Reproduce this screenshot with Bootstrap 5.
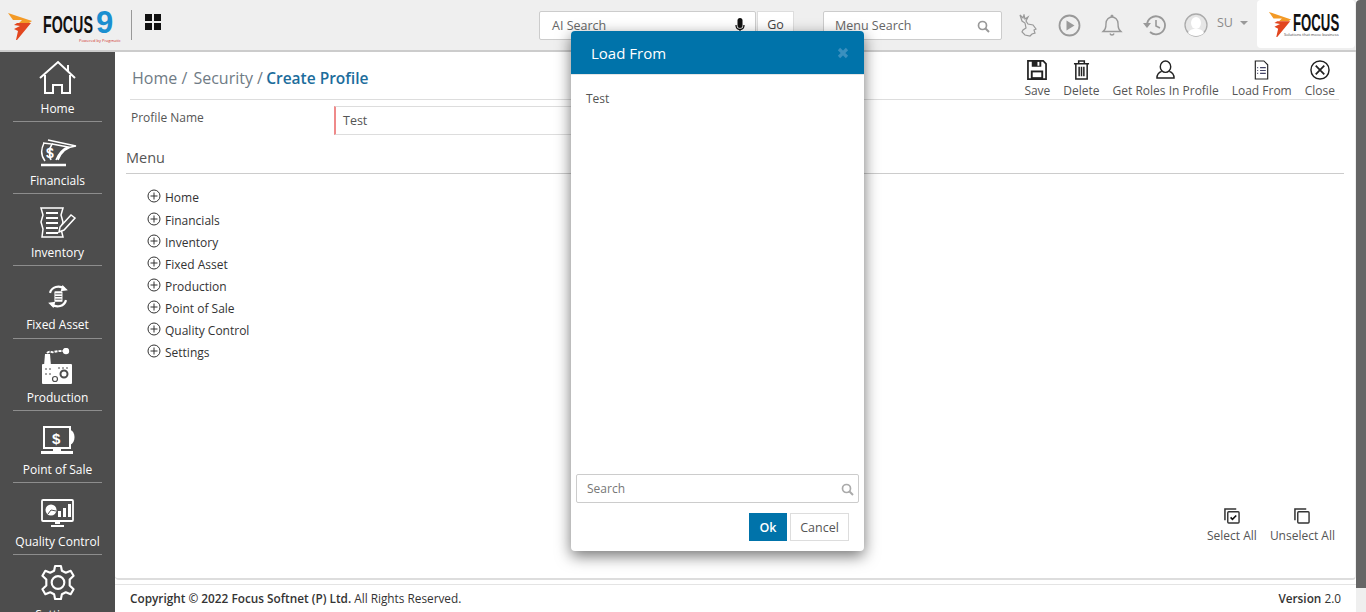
<!DOCTYPE html>
<html lang="en">
<head>
<meta charset="UTF-8">
<title>Create Profile</title>
<link href="https://cdn.jsdelivr.net/npm/bootstrap@5.3.0/dist/css/bootstrap.min.css" rel="stylesheet">
<style>
html, body { height: 612px; overflow: hidden; }
body { font-family: "Open Sans", "Liberation Sans", sans-serif; font-size: 12px; color: #444; background: #fff; position: relative; }
.app-left { width: 1356px; flex-shrink: 0; }
.top-bar { height: 52px; background: #efefef; border-bottom: 2px solid #ccc; padding-left: 8px; }
.brand-flame { margin-top: 3px; margin-right: 11px; }
.brand-block { width: 88px; height: 40px; position: relative; }
.brand-word { display: block; font-family: "Liberation Sans", sans-serif; font-weight: 700; color: #111; transform: scaleX(.62); transform-origin: left center; font-size: 23px; line-height: 1; width: 50px; white-space: nowrap; margin-top: 9px; }
.brand-nine { position: absolute; left: 53px; top: 2px; font-family: "Liberation Sans", sans-serif; font-weight: 700; font-size: 31px; color: #1b8fd0; line-height: 1; }
.brand-tag { position: absolute; left: 36px; top: 33px; font-size: 4px; line-height: 5px; color: #d0342c; white-space: nowrap; }
.brand-rule { width: 1px; height: 30px; background: #999; margin-right: 13px; }
.top-input { height: 29px; background: #fff; border: 1px solid #ccc; border-radius: 2px; color: #666; font-size: 12.5px; padding: 2px 11px 0; }
.top-ai { width: 217px; margin-left: 378px; padding-left: 12px; }
.top-go { width: 37px; height: 28px; margin-left: 1px; background: #fff; border: 1px solid #ddd; font-size: 12.5px; color: #444; text-align: center; line-height: 26px; }
.top-menu { width: 179px; margin-left: 29px; }
.top-icons { margin-left: 14px; width: 241px; }
.user-tag { color: #8a8a8a; font-size: 12.5px; }
.logo-box { width: 98px; height: 48px; background: #fff; border-radius: 4px; padding: 0 0 0 11px; margin-bottom: 2px; }
.logo-word { display: block; font-family: "Liberation Sans", sans-serif; font-weight: 700; color: #111; font-size: 24px; line-height: 18px; transform: scaleX(.55); transform-origin: left center; white-space: nowrap; width: 46px; }
.logo-sub { font-size: 4px; color: #444; line-height: 4px; white-space: nowrap; margin-left: -9px; margin-top: 1px; }
.page-body { height: 560px; }
.side-nav { width: 115px; background: #4d4d4d; overflow: hidden; flex-shrink: 0; color: #fff; }
.side-item { height: 72.2px; margin: 0 13px; border-bottom: 1px solid #8d8d8d; display: flex; flex-direction: column; align-items: center; justify-content: flex-end; padding-bottom: 4px; font-size: 12px; white-space: nowrap; line-height: 17px; }
.side-item svg { margin-bottom: 5px; }
.side-item:first-child { height: 70px; }
.side-raise { padding-bottom: 5px; }
.side-raise svg { margin-bottom: 7px; }
.side-last { border-bottom: 0; height: 72px; justify-content: flex-start; padding-top: 9px; }
.main-area { width: 1241px; }
.scroll-strip { width: 10px; height: 612px; background: #666; position: relative; flex-shrink: 0; border-radius: 4px 0 0 0; }
.scroll-end { position: absolute; left: 0; right: 0; bottom: 0; height: 24px; background: #efefef; }
.work-pane { height: 528px; padding: 0 11px 0 11px; position: relative; border-bottom: 2px solid #ddd; border-right: 1px solid #eee; border-radius: 0 0 4px 4px; }
.title-row { height: 48px; margin-left: 4px; margin-right: 5px; border-bottom: 1px solid #ddd; }
.crumbs { font-size: 16px; color: #6f7b85; padding-left: 2px; padding-bottom: 9px; line-height: 24px; }
.crumbs b { color: #1c6d9c; font-weight: 600; font-size: 15.5px; margin-left: -3px; }
.crumbs span { margin-right: 2px; }
.tool-group { margin-right: 4px; }
.tool-btn { display: flex; flex-direction: column; align-items: center; line-height: 16px; font-size: 12px; color: #555; margin-left: 13px; white-space: nowrap; }
.tool-btn svg { height: 20px; margin-bottom: 3px; }
.form-line { height: 35px; margin-left: 5px; }
.form-label-text { width: 203px; padding-top: 9px; color: #555; font-size: 12px; }
.name-input { width: 300px; height: 29px; margin-top: 6px; border: 1px solid #ddd; border-left: 2px solid #ef8a8a; padding: 0 7px; line-height: 28px; color: #555; font-size: 12.5px; }
.menu-title { font-size: 14.5px; color: #555; line-height: 20px; padding-top: 13px; border-bottom: 1px solid #ccc; box-sizing: content-box; height: 25px; }
.tree-list { padding: 13px 0 0 21px; margin: 0; list-style: none; }
.tree-list li { height: 22px; display: flex; align-items: center; gap: 4px; color: #333; font-size: 12px; }
.tree-list li:first-child { height: 23px; padding-bottom: 1px; }
.tree-list svg { margin-bottom: 4px; }
.pick-row { position: absolute; right: 20px; bottom: 34px; gap: 13px; }
.pick-btn { display: flex; flex-direction: column; align-items: center; color: #555; font-size: 12px; line-height: 16px; gap: 4px; }
.foot-bar { height: 28px; margin-top: 4px; border-top: 1px solid #e4e4e4; padding: 0 15px 0 15px; font-size: 11.800px; color: #333; }
.foot-bar b { font-weight: 600; }
.load-dialog { position: absolute; left: 571px; top: 31px; width: 293px; height: 520px; background: #fff; border-radius: 4px; box-shadow: 0 5px 15px rgba(0,0,0,.55); border: 0; overflow: hidden; z-index: 5; }
.load-head { background: #0073aa; color: #fff; font-size: 15px; padding: 1px 15px 0 20px; border-radius: 0; border-bottom: 1px solid #e5e5e5; height: 44px; flex-shrink: 0; }
.load-main { padding: 15px 15px; color: #555; font-size: 12px; line-height: 17px; }
.load-search { height: 29px; margin: 0 5px; border: 1px solid #ccc; border-radius: 2px; padding: 1px 4px 0 10px; color: #777; font-size: 12px; flex-shrink: 0; }
.load-foot { height: 48px; padding: 10px 15px 0 0; gap: 3px; flex-shrink: 0; }
.act-ok { width: 38px; height: 28px; background: #0073aa; color: #fff; font-size: 12.5px; font-weight: 600; border: 0; border-radius: 0; padding: 2px 0 0; margin: 0; }
.act-cancel { width: 59px; height: 28px; background: #fff; color: #555; font-size: 12.5px; border: 1px solid #ddd; border-radius: 0; padding: 2px 0 0; margin: 0; }
</style>
</head>
<body>
<div class="d-flex">
<div class="app-left">
<header class="top-bar d-flex align-items-center">
  <svg width="24" height="27" viewBox="0 0 24 27" class="brand-flame flex-shrink-0"><polygon points="0,0 24,8 21,10 11,10 14,7 5,7" fill="#f39a26"/><polygon points="9,10 23,10 9,27 8,27 10,18 6,16 12,13 6,12" fill="#e2461f"/></svg>
  <div class="brand-block flex-shrink-0">
    <span class="brand-word">FOCUS</span>
    <span class="brand-nine">9</span>
    <span class="brand-tag">Powered by Pragmatic</span>
  </div>
  <div class="brand-rule"></div>
  <svg width="16" height="16" viewBox="0 0 16 16" class="flex-shrink-0" style="margin-bottom:6px"><path d="M0 0h7v7H0zM9 0h7v7H9zM0 9h7v7H0zM9 9h7v7H9z" fill="#111"/></svg>
  <div class="top-input top-ai d-flex align-items-center justify-content-between flex-shrink-0">
    <span>AI Search</span>
    <svg width="10" height="17" viewBox="0 0 10 17" style="margin-right:-1px"><rect x="2.500" y="0" width="5" height="10" rx="2.500" fill="#111"/><path d="M1 7c0 6 8 6 8 0M5 12v3M2 16h6" stroke="#111" stroke-width="1.300" fill="none"/></svg>
  </div>
  <div class="top-go flex-shrink-0">Go</div>
  <div class="top-input top-menu d-flex align-items-center justify-content-between flex-shrink-0">
    <span>Menu Search</span>
    <svg width="13" height="13" viewBox="0 0 13 13"><circle cx="5.500" cy="5.500" r="4" stroke="#999" stroke-width="1.700" fill="none"/><path d="M8.500 8.500l3.500 3.500" stroke="#999" stroke-width="2"/></svg>
  </div>
  <div class="top-icons d-flex align-items-center flex-shrink-0">
    <svg width="18" height="23" viewBox="0 0 18 23" style="margin-left:3px" fill="none" stroke="#999" stroke-width="1.200"><path d="M1 1l3 3 1-3 1 4 3-2-2 4 2 3 5 1 3 4-2 1 1 3-3 1-2 2-5-1-3-3 1-2 3-2-1-5-3-2z"/></svg>
    <svg width="23" height="23" viewBox="0 0 23 23" style="margin-left:21px"><circle cx="11.500" cy="11.500" r="10" fill="none" stroke="#999" stroke-width="1.800"/><polygon points="8.500,6.500 16.500,11.500 8.500,16.500" fill="#999"/></svg>
    <svg width="22" height="24" viewBox="0 0 22 24" style="margin-left:20px"><path d="M2 18.500c2-2 3-3 3-8 0-4 3-6.500 6-6.500s6 2.500 6 6.500c0 5 1 6 3 8zM9 20.500c.5 2 3.500 2 4 0M10 4c0-2.500 2-2.500 2 0" fill="none" stroke="#999" stroke-width="1.400"/></svg>
    <svg width="23" height="22" viewBox="0 0 23 22" style="margin-left:20px"><path d="M4 11a9 9 0 1 1 3 7" fill="none" stroke="#999" stroke-width="1.800"/><polygon points="0,9 8,9 4,14" fill="#999"/><path d="M13 6v6l4 2" fill="none" stroke="#999" stroke-width="1.600"/></svg>
    <svg width="24" height="24" viewBox="0 0 24 24" style="margin-left:18px"><circle cx="12" cy="12" r="11" fill="#e6e6e6" stroke="#aaa" stroke-width="1.300"/><ellipse cx="12" cy="10" rx="5" ry="6" fill="#fff"/><path d="M4 20c2-4 5-4 8-4s6 0 8 4c-4 4-12 4-16 0z" fill="#fff"/></svg>
    <span class="user-tag" style="margin-left:9px;margin-bottom:4px">SU</span>
    <svg width="8" height="4" viewBox="0 0 8 4" style="margin-left:7px;margin-bottom:4px"><polygon points="0,0 8,0 4,4" fill="#999"/></svg>
  </div>
  <div class="logo-box d-flex align-items-center flex-shrink-0">
    <svg width="24" height="25" viewBox="0 0 24 27" class="flex-shrink-0"><polygon points="0,0 24,8 21,10 11,10 14,7 5,7" fill="#f39a26"/><polygon points="9,10 23,10 9,27 8,27 10,18 6,16 12,13 6,12" fill="#e2461f"/></svg>
    <div style="margin-left:1px;margin-top:3px">
      <span class="logo-word">FOCUS</span>
      <div class="logo-sub">Solutions that move business</div>
    </div>
  </div>
</header>
<div class="page-body d-flex">
  <nav class="side-nav">
    <div class="side-item">
      <svg width="38" height="35" viewBox="0 0 38 35" fill="none" stroke="#fff" stroke-width="2"><path d="M1 18L19 2l17 16M6 15v18h8v-8h9v8h8V15M29 5v6"/></svg>Home
    </div>
    <div class="side-item">
      <svg width="38" height="28" viewBox="0 0 38 28" fill="none" stroke="#fff" stroke-width="1.500"><path d="M9 1l28 6C27 8 22 13 19 21M5 4C2 10 2 17 6 22M13 5l16 3c-6 2-9 6-12 13M25 10c-3 2-5 6-6 11"/><path d="M4 4l9 1c-3 5-3 11-1 16"/><path d="M2 26h25" stroke-width="2.500"/><text x="7" y="19" font-size="14" font-weight="700" fill="#fff" stroke="none" font-family="Liberation Sans, sans-serif">$</text></svg>Financials
    </div>
    <div class="side-item">
      <svg width="38" height="32" viewBox="0 0 38 32" fill="none" stroke="#fff" stroke-width="1.500"><path d="M2 1h22l-2 7 2 7-2 7 2 8H3l1-8-2-7 2-7z"/><path d="M7 6h12M7 11h12M7 16h12M7 21h12M7 26h12" stroke-width="2"/><path d="M21 20l11-12 4 3-11 12-5 2z" fill="#4d4d4d"/></svg>Inventory
    </div>
    <div class="side-item side-raise">
      <svg width="22" height="25" viewBox="0 0 24 28" fill="none" stroke="#fff" stroke-width="2.500"><path d="M3 10C5 3 13 1 19 5M21 18c-2 7-10 9-16 5"/><polygon points="17,1 23,7 15,8" fill="#fff" stroke="none"/><polygon points="7,27 1,21 9,20" fill="#fff" stroke="none"/><rect x="8" y="8" width="9" height="12" rx="1" fill="#fff" stroke="none"/><path d="M9 11h7M9 14h7M9 17h7" stroke="#4d4d4d" stroke-width="1"/></svg>Fixed Asset
    </div>
    <div class="side-item">
      <svg width="31" height="36" viewBox="0 0 31 36"><polygon points="2,18 3,6 8,6 9,18" fill="#fff"/><path d="M5 5C8 2 9 5 12 4s6-1 9-1" fill="none" stroke="#fff" stroke-width="2" stroke-dasharray="3 1"/><circle cx="24" cy="3" r="3.200" fill="#fff"/><rect x="0" y="16" width="30" height="20" rx="1" fill="#fff"/><circle cx="22" cy="26" r="3.500" fill="none" stroke="#4d4d4d" stroke-width="2"/><circle cx="13" cy="31" r="2.500" fill="none" stroke="#4d4d4d" stroke-width="1.200"/><path d="M3 21h8M16 20h10M3 26h6" stroke="#4d4d4d" stroke-width="1" stroke-dasharray="2 2"/></svg>Production
    </div>
    <div class="side-item">
      <svg width="36" height="30" viewBox="0 0 36 30"><rect x="4" y="1" width="26" height="21" fill="none" stroke="#fff" stroke-width="2"/><path d="M30 4c6 1 6 13 0 15z" fill="#fff"/><rect x="1" y="25" width="32" height="3" fill="#fff"/><rect x="13" y="22" width="8" height="3" fill="#fff"/><text x="12" y="18" font-size="15" font-weight="700" fill="#fff" font-family="Liberation Sans, sans-serif">$</text></svg>Point of Sale
    </div>
    <div class="side-item">
      <svg width="33" height="29" viewBox="0 0 33 29"><rect x="1" y="1" width="31" height="21" rx="1" fill="none" stroke="#fff" stroke-width="1.800"/><circle cx="10" cy="11" r="5.500" fill="#fff"/><path d="M10 11l5 1M10 11l-3 4" stroke="#4d4d4d"/><rect x="17" y="12" width="3" height="6" fill="#fff"/><rect x="22" y="9" width="3" height="9" fill="#fff"/><rect x="27" y="5" width="3" height="13" fill="#fff"/><path d="M14 22h5v3h-5zM10 26h13v2H10z" fill="#fff"/></svg>Quality Control
    </div>
    <div class="side-item side-last">
      <svg width="38" height="38" viewBox="0 0 38 38" fill="none" stroke="#fff" stroke-width="2.200"><circle cx="19" cy="19" r="6.500"/><path d="M16 2h6l1 5 4 2 5-2 3 5-4 4v6l4 4-3 5-5-2-4 2-1 5h-6l-1-5-4-2-5 2-3-5 4-4v-6l-4-4 3-5 5 2 4-2z" stroke-linejoin="round"/></svg>Settings
    </div>
  </nav>
  <div class="main-area d-flex flex-column">
    <section class="work-pane">
      <div class="title-row d-flex justify-content-between align-items-end">
        <div class="crumbs"><span>Home /</span> <span>Security /</span> <b>Create Profile</b></div>
        <div class="d-flex tool-group">
          <div class="tool-btn"><svg width="20" height="20" viewBox="0 0 21 21"><path d="M1 1h16l3 3v16H1z" fill="none" stroke="#222" stroke-width="1.800"/><path d="M5 1h10v6H5zM4 11h13v9H4z" fill="#222"/><rect x="11" y="2" width="2" height="4" fill="#fff"/><rect x="6" y="13" width="9" height="5" fill="#fff"/></svg>Save</div>
          <div class="tool-btn"><svg width="17" height="20" viewBox="0 0 18 21" fill="none" stroke="#222" stroke-width="1.600"><path d="M1 4h16M6 4V1h6v3M3 4v16h12V4"/><path d="M6.500 7v10M9 7v10M11.500 7v10"/></svg>Delete</div>
          <div class="tool-btn"><svg width="19" height="20" viewBox="0 0 20 21" fill="none" stroke="#222" stroke-width="1.500"><ellipse cx="10" cy="7" rx="5.500" ry="6"/><path d="M6 12c-3 1-5 3-5 7h18c0-4-2-6-5-7"/></svg>Get Roles In Profile</div>
          <div class="tool-btn"><svg width="15" height="20" viewBox="0 0 15 21" fill="none" stroke="#222" stroke-width="1.200"><path d="M1 1h9l4 4v15H1z"/><path d="M3 8h1M6 8h6M3 11h1M6 11h6M3 14h1M6 14h6" stroke="#446"/></svg>Load From</div>
          <div class="tool-btn"><svg width="20" height="20" viewBox="0 0 21 21" fill="none" stroke="#222" stroke-width="1.500"><circle cx="10.500" cy="10.500" r="9.500"/><path d="M6 6l9 9M15 6l-9 9" stroke-width="1.800"/></svg>Close</div>
        </div>
      </div>
      <div class="form-line d-flex">
        <div class="form-label-text">Profile Name</div>
        <div class="name-input">Test</div>
      </div>
      <div class="menu-title">Menu</div>
      <ul class="tree-list">
        <li><svg width="14" height="14" viewBox="0 0 14 14" fill="none" stroke="#333"><circle cx="7" cy="7" r="6"/><path d="M7 3.500v7M3.500 7h7"/></svg>Home</li>
        <li><svg width="14" height="14" viewBox="0 0 14 14" fill="none" stroke="#333"><circle cx="7" cy="7" r="6"/><path d="M7 3.500v7M3.500 7h7"/></svg>Financials</li>
        <li><svg width="14" height="14" viewBox="0 0 14 14" fill="none" stroke="#333"><circle cx="7" cy="7" r="6"/><path d="M7 3.500v7M3.500 7h7"/></svg>Inventory</li>
        <li><svg width="14" height="14" viewBox="0 0 14 14" fill="none" stroke="#333"><circle cx="7" cy="7" r="6"/><path d="M7 3.500v7M3.500 7h7"/></svg>Fixed Asset</li>
        <li><svg width="14" height="14" viewBox="0 0 14 14" fill="none" stroke="#333"><circle cx="7" cy="7" r="6"/><path d="M7 3.500v7M3.500 7h7"/></svg>Production</li>
        <li><svg width="14" height="14" viewBox="0 0 14 14" fill="none" stroke="#333"><circle cx="7" cy="7" r="6"/><path d="M7 3.500v7M3.500 7h7"/></svg>Point of Sale</li>
        <li><svg width="14" height="14" viewBox="0 0 14 14" fill="none" stroke="#333"><circle cx="7" cy="7" r="6"/><path d="M7 3.500v7M3.500 7h7"/></svg>Quality Control</li>
        <li><svg width="14" height="14" viewBox="0 0 14 14" fill="none" stroke="#333"><circle cx="7" cy="7" r="6"/><path d="M7 3.500v7M3.500 7h7"/></svg>Settings</li>
      </ul>
      <div class="pick-row d-flex">
        <div class="pick-btn"><svg width="16" height="16" viewBox="0 0 17 17" fill="none"><path d="M1 13V1h12" stroke="#333" stroke-width="1.600"/><rect x="4" y="4" width="12" height="12" rx="1" stroke="#333" stroke-width="1.500" fill="#fff"/><path d="M7 10l2 2 4-4" stroke="#111" stroke-width="1.700"/></svg>Select All</div>
        <div class="pick-btn"><svg width="16" height="16" viewBox="0 0 17 17" fill="none"><path d="M1 13V1h12" stroke="#333" stroke-width="1.600"/><rect x="4" y="4" width="12" height="12" rx="1" stroke="#333" stroke-width="1.500" fill="#fff"/></svg>Unselect All</div>
      </div>
    </section>
    <footer class="foot-bar d-flex justify-content-between align-items-center">
      <div><b>Copyright © 2022 Focus Softnet (P) Ltd.</b> All Rights Reserved.</div>
      <div><b>Version</b> 2.0</div>
    </footer>
  </div>
</div>
</div>
<div class="scroll-strip"><div class="scroll-end"></div></div>
</div>
<div class="modal-content load-dialog d-flex flex-column">
  <div class="modal-header load-head">
    <span>Load From</span>
    <svg width="12" height="12" viewBox="0 0 12 12" class="ms-auto"><path d="M2 2l8 8M10 2l-8 8" stroke="#3a90bf" stroke-width="3.200"/></svg>
  </div>
  <div class="modal-body load-main flex-grow-1">Test</div>
  <div class="load-search d-flex align-items-center justify-content-between">
    <span>Search</span>
    <svg width="13" height="13" viewBox="0 0 13 13"><circle cx="5.500" cy="5.500" r="4" stroke="#aaa" stroke-width="1.700" fill="none"/><path d="M8.500 8.500l3.500 3.500" stroke="#aaa" stroke-width="2"/></svg>
  </div>
  <div class="modal-footer load-foot d-flex justify-content-end align-items-start border-0">
    <button class="btn act-ok">Ok</button>
    <button class="btn act-cancel">Cancel</button>
  </div>
</div>
<script src="https://cdn.jsdelivr.net/npm/bootstrap@5.3.0/dist/js/bootstrap.bundle.min.js"></script>
</body>
</html>
